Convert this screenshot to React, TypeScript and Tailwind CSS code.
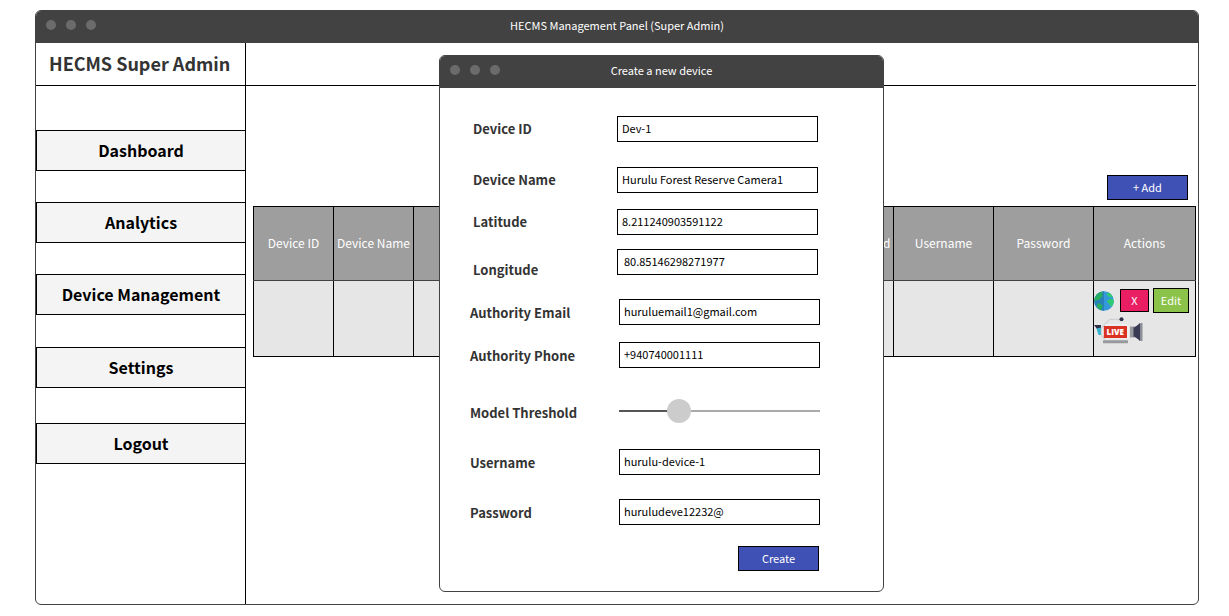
import { useState } from "react";
import type { ReactNode } from "react";

const primaryNav = ["Dashboard", "Analytics", "Device Management"];
const secondaryNav = ["Settings", "Logout"];

const columns = [
  { name: "Device ID", width: "w-[80px]" },
  { name: "Device Name", width: "w-[80px]" },
  { name: "Latitude", width: "w-[105px]" },
  { name: "Longitude", width: "w-[95px]" },
  { name: "Authority Email", width: "w-[90px]" },
  { name: "Authority Phone", width: "w-[90px]" },
  { name: "Model Threshold", width: "w-[100px]" },
  { name: "Username", width: "w-[100px]" },
  { name: "Password", width: "w-[100px]" },
  { name: "Actions", width: "w-[102px]" },
];

function TitleBar({ children }: { children: ReactNode }) {
  return (
    <div className="relative flex h-8 shrink-0 items-center justify-center bg-[#424242] pb-[3px] text-[11px] text-white">
      <div className="absolute top-[9px] left-[10px] flex gap-[10px]">
        <span className="size-[10px] rounded-full bg-[#6b6b6b]" />
        <span className="size-[10px] rounded-full bg-[#6b6b6b]" />
        <span className="size-[10px] rounded-full bg-[#6b6b6b]" />
      </div>
      {children}
    </div>
  );
}

function NavButton({ name }: { name: string }) {
  return (
    <button
      type="button"
      className="h-[41px] w-full border-y border-l border-black bg-[#f4f4f4] pb-[2px] text-base leading-6 font-bold text-black"
    >
      {name}
    </button>
  );
}

function GlobeIcon() {
  return (
    <svg viewBox="0 0 20 20" className="size-5" aria-hidden="true">
      <circle cx="10" cy="10" r="9.8" fill="#3498db" />
      <path d="M10 .2a9.8 9.8 0 0 0 0 19.6z" fill="#2980b9" />
      <path d="M2.200 4.200 4.600 2l3.200-1.300L9 1.500 7.800 3.500l1.400 1.300-2.400 2-1.600 2.400-2-.4L1.800 10 .3 10 .5 7.500z" fill="#27ae60" />
      <path d="m3.200 12.800 2.300-.6 3.300 2.200-.8 2.300-1 2.600-2.400-1.200-1.600-2.800z" fill="#27ae60" />
      <path d="m14.200 1.300 2.600 1.700 2 2.800-2.200.8-2.200-1.400-1.900-1.900z" fill="#2ecc71" />
      <path d="m13.300 9.600 3-1.900 3.400 1.100v2.800l-1.400 3.300-2.200.4-1-2.800-1.800-1.100z" fill="#2ecc71" />
    </svg>
  );
}

function LiveCameraIcon() {
  return (
    <svg viewBox="0 0 50 27" className="h-[27px] w-[50px]" aria-hidden="true">
      <path d="M0 8h7v6L3 12z" fill="#2f3148" />
      <path d="m2.500 11.500 4.500-1V18H4.500z" fill="#35b4cf" />
      <path d="M9.500 9 15.500 2.300h11" fill="none" stroke="#cfd0d4" strokeWidth="1.300" />
      <path d="M11 7h21a3 3 0 0 1 3 3v12H11l-3.500-4v-7z" fill="#eeeeef" />
      <path d="M11 7.500 7.500 11v7.500l3.500 4" fill="none" stroke="#cfd0d4" strokeWidth="1.200" />
      <circle cx="27.500" cy="2.300" r="2" fill="#2f3148" />
      <rect x="9.800" y="9" width="23.200" height="12" fill="#d93222" />
      <rect x="9" y="23.200" width="25" height="3" rx=".5" fill="#96999d" />
      <rect x="36" y="9.500" width="4.500" height="11" fill="#96999d" />
      <path d="M39.500 10.500C42 10 43.500 8 46 6v18c-2.500-2-4-4-6.500-4.500z" fill="#393b54" />
      <rect x="46" y="6" width="2.500" height="18" rx=".5" fill="#8b8e95" />
      <text
        x="21.300"
        y="17.900"
        textAnchor="middle"
        fill="#fff"
        className="font-['Open_Sans',sans-serif] text-[8px] font-extrabold"
      >
        LIVE
      </text>
    </svg>
  );
}

type FieldProps = {
  id: string;
  label: string;
  value: string;
  row?: string;
  labelBox?: string;
  indent?: string;
};

function Field({
  id,
  label,
  value,
  row = "h-[26px] items-center",
  labelBox = "w-[149px] pt-[2px]",
  indent = "px-1",
}: FieldProps) {
  return (
    <div className={`flex ${row}`}>
      <label htmlFor={id} className={`${labelBox} shrink-0 text-[13px] leading-[26px] font-bold text-[#333]`}>
        {label}
      </label>
      <input
        id={id}
        defaultValue={value}
        className={`h-[26px] w-[201px] border border-black bg-white pb-[2px] text-[11px] text-black outline-none ${indent}`}
      />
    </div>
  );
}

function ThresholdSlider() {
  const [value, setValue] = useState(27);
  return (
    <div className="flex h-6 items-center">
      <label htmlFor="threshold" className="w-[149px] shrink-0 pt-1 text-[13px] font-bold text-[#333]">
        Model Threshold
      </label>
      <input
        id="threshold"
        type="range"
        min={0}
        max={100}
        value={value}
        onChange={(e) => setValue(Number(e.target.value))}
        className="h-6 w-[201px] appearance-none bg-[length:100%_2px] bg-center bg-no-repeat [&::-webkit-slider-thumb]:size-6 [&::-webkit-slider-thumb]:appearance-none [&::-webkit-slider-thumb]:rounded-full [&::-webkit-slider-thumb]:bg-[#ccc]"
        style={{ backgroundImage: `linear-gradient(to right, #555 ${value}%, #aaa ${value}%)` }}
      />
    </div>
  );
}

function CreateDeviceDialog() {
  return (
    <div className="absolute inset-0 flex items-start justify-center pt-[55px] pl-[94px]">
      <div
        role="dialog"
        aria-label="Create a new device"
        className="w-[445px] overflow-hidden rounded-md border border-[#424242] bg-white"
      >
        <TitleBar>Create a new device</TitleBar>
        <form className="pt-7 pb-5 pl-[30px]" onSubmit={(e) => e.preventDefault()}>
          <div className="flex flex-col pl-[3px]">
            <Field id="device-id" label="Device ID" value="Dev-1" labelBox="w-[144px]" />
            <div className="mt-[25px] flex flex-col gap-4">
              <Field id="device-name" label="Device Name" value="Hurulu Forest Reserve Camera1" labelBox="w-[144px]" />
              <Field id="latitude" label="Latitude" value="8.211240903591122" labelBox="w-[144px]" />
            </div>
            <div className="mt-[14px]">
              <Field
                id="longitude"
                label="Longitude"
                value="80.85146298271977"
                row="h-[34px] items-start"
                labelBox="w-[144px] self-end"
                indent="px-[6px]"
              />
            </div>
          </div>
          <div className="mt-4 flex flex-col gap-[17px]">
            <Field id="email" label="Authority Email" value="huruluemail1@gmail.com" />
            <Field id="phone" label="Authority Phone" value="+940740001111" />
          </div>
          <div className="mt-[31px]">
            <ThresholdSlider />
          </div>
          <div className="mt-[26px] flex flex-col gap-6">
            <Field id="username" label="Username" value="hurulu-device-1" />
            <Field id="password" label="Password" value="huruludeve12232@" />
          </div>
          <div className="mt-[21px] flex w-[349px] justify-end">
            <button type="submit" className="h-[25px] w-[81px] border border-black bg-[#3f51b5] text-[11px] text-white">
              Create
            </button>
          </div>
        </form>
      </div>
    </div>
  );
}

export default function App() {
  return (
    <div className="relative flex min-h-screen flex-col bg-white pt-[10px] pr-[30px] pb-[11px] pl-[35px] font-['Noto_Sans_CJK_SC',sans-serif]">
      <div className="flex flex-1 flex-col overflow-hidden rounded-md border border-[#424242]">
        <TitleBar>HECMS Management Panel (Super Admin)</TitleBar>
        <div className="flex flex-1">
          <aside className="w-[210px] shrink-0 border-r border-black">
            <div className="flex h-[43px] items-center border-b border-black pb-[2px] pl-[13px]">
              <h1 className="text-lg leading-6 font-bold whitespace-nowrap text-[#333]">HECMS Super Admin</h1>
            </div>
            <nav className="pt-11">
              <div className="flex flex-col gap-[31px]">
                {primaryNav.map((name) => (
                  <NavButton key={name} name={name} />
                ))}
              </div>
              <div className="mt-8 flex flex-col gap-[35px]">
                {secondaryNav.map((name) => (
                  <NavButton key={name} name={name} />
                ))}
              </div>
            </nav>
          </aside>
          <main className="min-w-0 flex-1 pr-[2px]">
            <div className="h-[43px] border-b border-black" />
            <div className="flex justify-end pt-[89px] pr-2">
              <button type="button" className="h-[25px] w-[81px] border border-black bg-[#3f51b5] text-[11px] text-white">
                + Add
              </button>
            </div>
            <div className="pt-[6px] pl-[7px]">
              <table className="w-full table-fixed border-collapse text-xs">
                <thead>
                  <tr className="h-[74px] bg-[#9e9e9e] text-white">
                    {columns.map((c) => (
                      <th
                        key={c.name}
                        className={`${c.width} border border-black border-b-[#424242] p-0 pb-[2px] text-center font-normal whitespace-nowrap`}
                      >
                        {c.name}
                      </th>
                    ))}
                  </tr>
                </thead>
                <tbody>
                  <tr className="h-[76px] bg-[#e6e6e6]">
                    {columns.slice(0, -1).map((c) => (
                      <td key={c.name} className="border border-black" />
                    ))}
                    <td className="border border-black p-0 align-top">
                      <div className="box-content flex h-[25px] items-center pt-[7px]">
                        <button type="button" aria-label="Show on map">
                          <GlobeIcon />
                        </button>
                        <button
                          type="button"
                          aria-label="Delete"
                          className="ml-[6px] h-[23px] w-[29px] border border-black bg-[#e91e63] text-[11px] text-white"
                        >
                          X
                        </button>
                        <button
                          type="button"
                          className="ml-1 h-[25px] w-9 border border-black bg-[#8bc34a] text-[11px] text-white"
                        >
                          Edit
                        </button>
                      </div>
                      <button type="button" aria-label="Watch live" className="mt-1 block">
                        <LiveCameraIcon />
                      </button>
                    </td>
                  </tr>
                </tbody>
              </table>
            </div>
          </main>
        </div>
      </div>
      <CreateDeviceDialog />
    </div>
  );
}
